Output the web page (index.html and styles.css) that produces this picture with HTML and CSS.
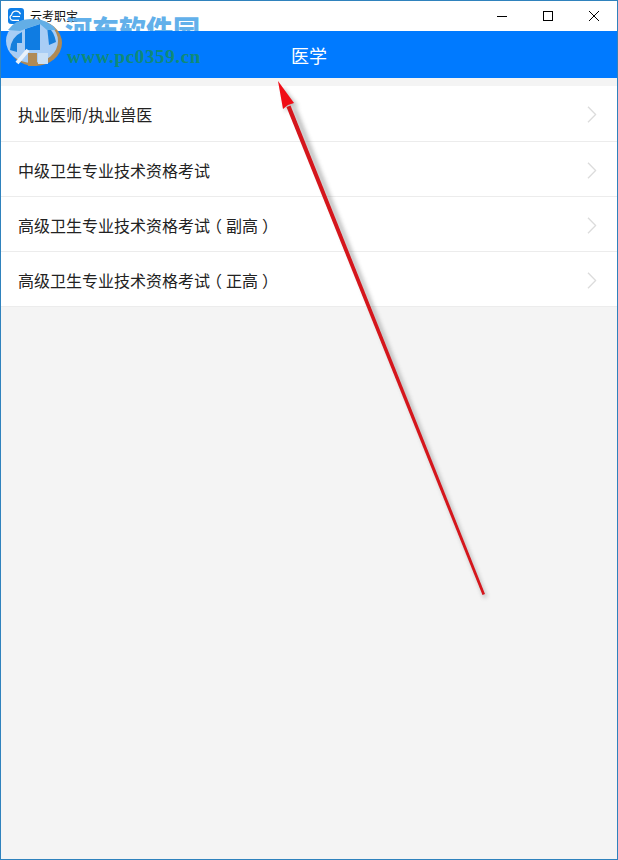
FILE: index.html
```html
<!DOCTYPE html>
<html lang="zh-CN">
<head>
<meta charset="utf-8">
<title>云考职宝</title>
<link rel="stylesheet" href="styles.css">
</head>
<body>
<div class="window">
  <div class="titlebar">
    <svg class="app-icon" width="16" height="16" viewBox="0 0 16 16"><rect width="16" height="16" rx="3" fill="#0f7fe8"/><path d="M12.5 6.2A4.6 4.6 0 0 0 3.6 7 2.8 2.8 0 0 0 5 12.3h6" fill="none" stroke="#fff" stroke-width="1.2"/><path d="M4.5 8.5h7.5" stroke="#fff" stroke-width="1.1"/></svg>
    <span class="app-title">云考职宝</span>
    <div class="controls">
      <svg class="ctl" width="12" height="12" viewBox="0 0 12 12"><path d="M1 6.5h10" stroke="#000"/></svg>
      <svg class="ctl" width="12" height="12" viewBox="0 0 12 12"><rect x="1.5" y="1.5" width="9" height="9" fill="none" stroke="#000"/></svg>
      <svg class="ctl" width="12" height="12" viewBox="0 0 12 12"><path d="M1 1l10 10M11 1L1 11" stroke="#000"/></svg>
    </div>
  </div>
  <header class="appbar">医学</header>
  <main class="content">
    <ul class="list">
      <li class="row"><span class="label">执业医师/执业兽医</span><svg class="chev" width="10" height="17" viewBox="0 0 10 17"><path d="M1 .7l7.6 7.8L1 16.300" fill="none" stroke="#dcdcdc" stroke-width="1.3"/></svg></li>
      <li class="row"><span class="label">中级卫生专业技术资格考试</span><svg class="chev" width="10" height="17" viewBox="0 0 10 17"><path d="M1 .7l7.6 7.8L1 16.300" fill="none" stroke="#dcdcdc" stroke-width="1.3"/></svg></li>
      <li class="row"><span class="label">高级卫生专业技术资格考试<span class="paren-open">（</span>副高<span class="paren-close">）</span></span><svg class="chev" width="10" height="17" viewBox="0 0 10 17"><path d="M1 .7l7.6 7.8L1 16.300" fill="none" stroke="#dcdcdc" stroke-width="1.3"/></svg></li>
      <li class="row"><span class="label">高级卫生专业技术资格考试<span class="paren-open">（</span>正高<span class="paren-close">）</span></span><svg class="chev" width="10" height="17" viewBox="0 0 10 17"><path d="M1 .7l7.6 7.8L1 16.300" fill="none" stroke="#dcdcdc" stroke-width="1.3"/></svg></li>
    </ul>
  </main>
  <div class="watermark">
    <svg class="wm-logo" width="80" height="64" viewBox="0 8 80 64">
      <ellipse cx="35" cy="43" rx="27" ry="23" fill="#b08a55"/>
      <ellipse cx="32" cy="41" rx="26" ry="22" fill="#a8cdf5"/>
      <path d="M10 50Q11 37 22 32L22 43 17 43 17 52Z" fill="#167fdc"/>
      <path d="M25 29L40 24 40 50 25 50Z" fill="#0f7ce2"/>
      <path d="M47 26Q54 31 56 42L49 45Z" fill="#167fdc"/>
      <path d="M8 30Q16 18 34 19 50 20 56 30L47 30 40 24 25 29 20 31Z" fill="#63aee6"/>
      <path d="M17 63L28 50" stroke="#e9f2fb" stroke-width="4"/>
      <path d="M28 53h9v13h-9Z" fill="#b08a55"/>
      <path d="M38 53h10v11h-10Z" fill="#c9e0f6"/>
    </svg>
    <div class="wm-cn"><span>河东软件园</span></div>
    <span class="wm-url">www.pc0359.cn</span>
  </div>
  <svg class="arrow" width="618" height="860" viewBox="0 0 618 860">
    <defs>
      <filter id="soft" x="-20%" y="-20%" width="140%" height="140%"><feGaussianBlur stdDeviation="2"/></filter>
      <filter id="edge" x="-5%" y="-5%" width="110%" height="110%"><feGaussianBlur stdDeviation="0.4"/></filter>
    </defs>
    <g opacity="0.4" fill="#5a5a5a" filter="url(#soft)">
      <path d="M487 597L296 107 291 109 484 598Z"/>
      <path d="M282 86L298 106 288 108 286 113Z"/>
    </g>
    <g filter="url(#edge)">
      <path d="M482.500 595L286.500 107 290.500 105.500 485 594Z" fill="#d5141b"/>
      <path d="M278 81L294 103 288 105 283 109Z" fill="#f00a14"/>
    </g>
  </svg>
</div>
</body>
</html>
```
FILE: styles.css
```css
* { box-sizing: border-box; }
html, body { margin: 0; padding: 0; }
body { font-family: "Noto Sans CJK SC", "Liberation Sans", sans-serif; }
.window {
  position: relative;
  width: 618px;
  height: 860px;
  border: 1px solid #2f82bd;
  background: #f4f4f4;
  overflow: hidden;
  display: flex;
  flex-direction: column;
}
.titlebar {
  height: 30px;
  flex: none;
  background: #fff;
  display: flex;
  align-items: center;
  padding-left: 7px;
  padding-bottom: 1px;
}
.app-icon { flex: none; }
.app-title { margin-left: 6px; font-size: 12px; color: #111; }
.controls {
  margin-left: auto;
  display: flex;
  align-items: center;
  gap: 34px;
  padding-right: 17px;
}
.ctl { display: block; }
.appbar {
  height: 47px;
  flex: none;
  background: #007aff;
  color: #fff;
  font-size: 18px;
  display: flex;
  align-items: center;
  justify-content: center;
}
.content { flex: 1; padding-top: 8px; }
.list { list-style: none; margin: 0; padding: 0; background: #fff; }
.row {
  height: 55px;
  padding: 2px 20px 0 17px;
  border-bottom: 1px solid #ececec;
  display: flex;
  align-items: center;
  justify-content: space-between;
  font-size: 16px;
  color: #222;
}
.row:first-child { height: 56px; padding-top: 1px; }
.label { white-space: nowrap; }
.paren-open { margin-left: -4px; margin-right: 4px; }
.paren-close { margin-left: 4px; margin-right: -4px; }
.chev { flex: none; margin-top: 1px; }
.arrow { position: absolute; left: -1px; top: -1px; pointer-events: none; }
.watermark { position: absolute; left: -1px; top: -1px; width: 220px; height: 72px; pointer-events: none; }
.wm-logo { position: absolute; left: 0; top: 8px; }
.wm-cn {
  position: absolute;
  left: 65px;
  top: 12px;
  height: 19px;
  overflow: hidden;
  font-family: "Noto Sans CJK SC", sans-serif;
  font-weight: 900;
  font-size: 27px;
  line-height: 34px;
  white-space: nowrap;
  color: #62b0ea;
}
.wm-url {
  position: absolute;
  left: 67px;
  top: 45px;
  font-family: "Liberation Serif", serif;
  font-weight: 700;
  font-size: 19px;
  line-height: 24px;
  letter-spacing: 0.65px;
  white-space: nowrap;
  color: #0f8a78;
}
```
